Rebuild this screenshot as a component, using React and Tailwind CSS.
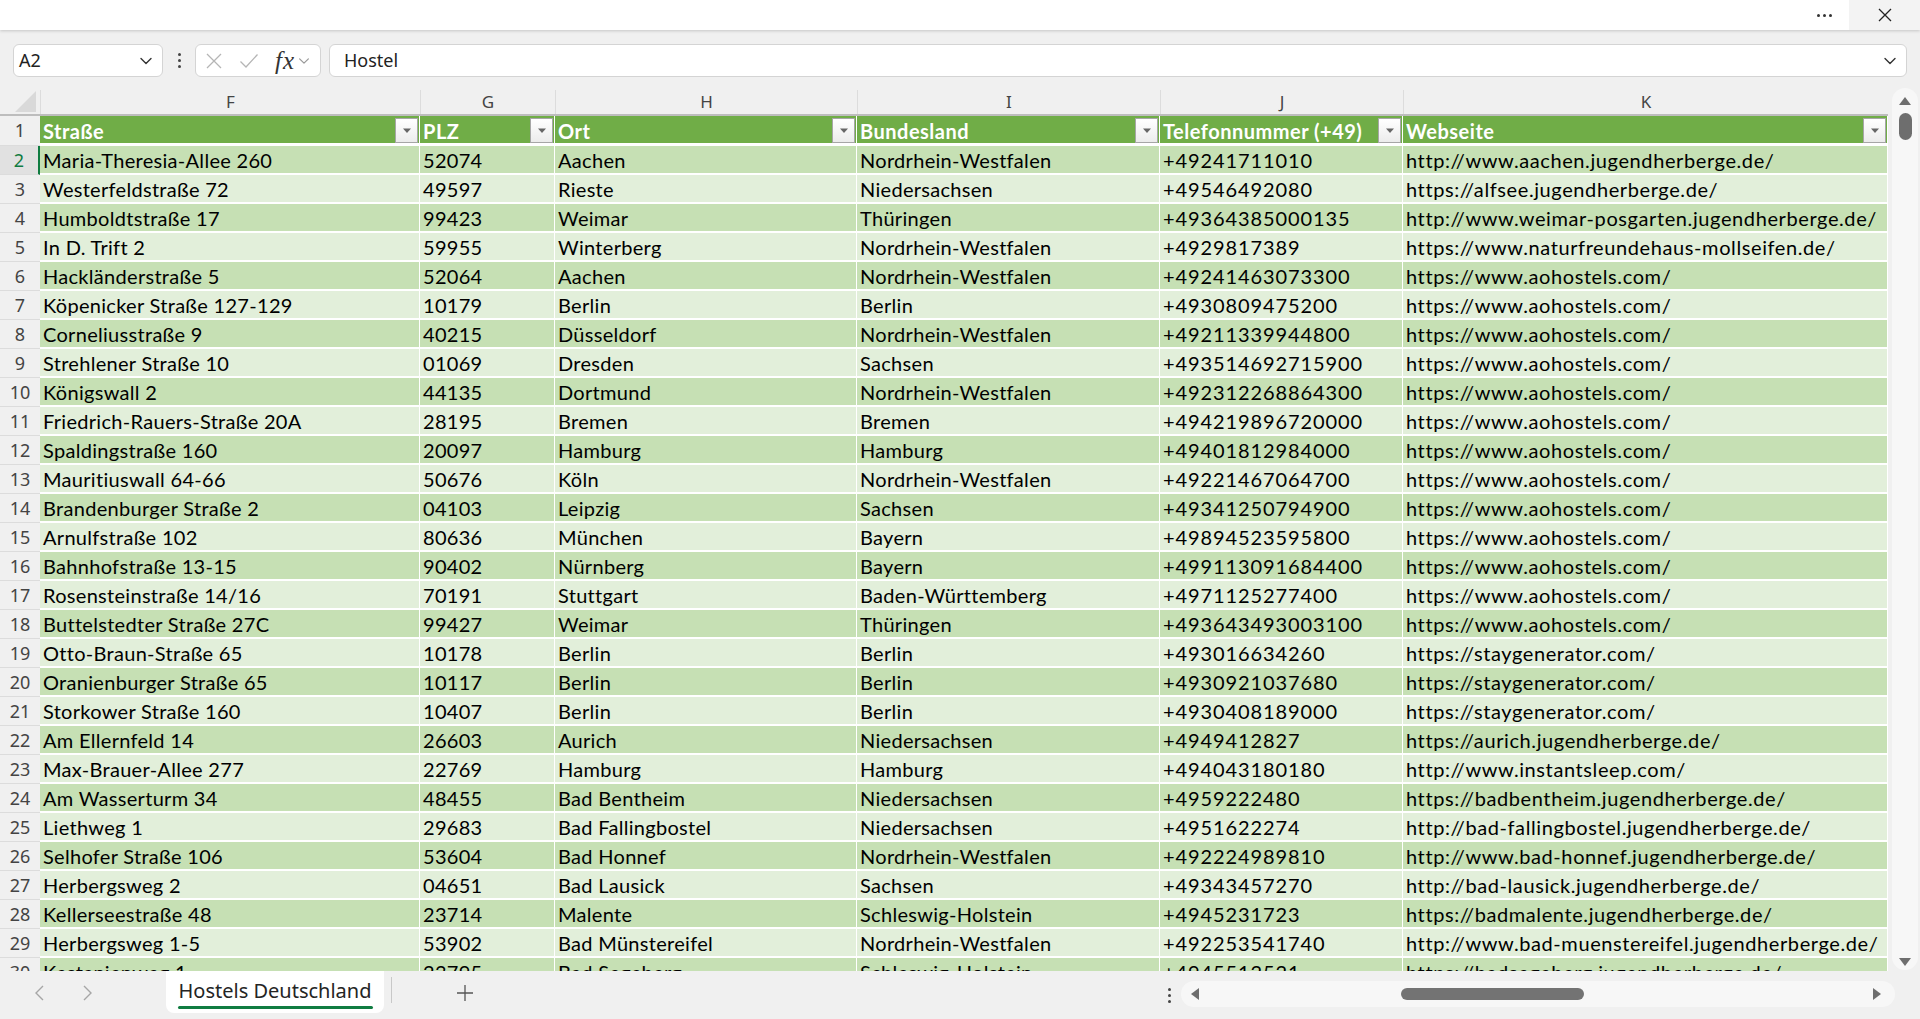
import React from "react";

const rows = [
  ["Maria-Theresia-Allee 260", "52074", "Aachen", "Nordrhein-Westfalen", "+49241711010", "http://www.aachen.jugendherberge.de/"],
  ["Westerfeldstraße 72", "49597", "Rieste", "Niedersachsen", "+49546492080", "https://alfsee.jugendherberge.de/"],
  ["Humboldtstraße 17", "99423", "Weimar", "Thüringen", "+49364385000135", "http://www.weimar-posgarten.jugendherberge.de/"],
  ["In D. Trift 2", "59955", "Winterberg", "Nordrhein-Westfalen", "+4929817389", "https://www.naturfreundehaus-mollseifen.de/"],
  ["Hackländerstraße 5", "52064", "Aachen", "Nordrhein-Westfalen", "+49241463073300", "https://www.aohostels.com/"],
  ["Köpenicker Straße 127-129", "10179", "Berlin", "Berlin", "+4930809475200", "https://www.aohostels.com/"],
  ["Corneliusstraße 9", "40215", "Düsseldorf", "Nordrhein-Westfalen", "+49211339944800", "https://www.aohostels.com/"],
  ["Strehlener Straße 10", "01069", "Dresden", "Sachsen", "+493514692715900", "https://www.aohostels.com/"],
  ["Königswall 2", "44135", "Dortmund", "Nordrhein-Westfalen", "+492312268864300", "https://www.aohostels.com/"],
  ["Friedrich-Rauers-Straße 20A", "28195", "Bremen", "Bremen", "+494219896720000", "https://www.aohostels.com/"],
  ["Spaldingstraße 160", "20097", "Hamburg", "Hamburg", "+49401812984000", "https://www.aohostels.com/"],
  ["Mauritiuswall 64-66", "50676", "Köln", "Nordrhein-Westfalen", "+49221467064700", "https://www.aohostels.com/"],
  ["Brandenburger Straße 2", "04103", "Leipzig", "Sachsen", "+49341250794900", "https://www.aohostels.com/"],
  ["Arnulfstraße 102", "80636", "München", "Bayern", "+49894523595800", "https://www.aohostels.com/"],
  ["Bahnhofstraße 13-15", "90402", "Nürnberg", "Bayern", "+499113091684400", "https://www.aohostels.com/"],
  ["Rosensteinstraße 14/16", "70191", "Stuttgart", "Baden-Württemberg", "+4971125277400", "https://www.aohostels.com/"],
  ["Buttelstedter Straße 27C", "99427", "Weimar", "Thüringen", "+493643493003100", "https://www.aohostels.com/"],
  ["Otto-Braun-Straße 65", "10178", "Berlin", "Berlin", "+493016634260", "https://staygenerator.com/"],
  ["Oranienburger Straße 65", "10117", "Berlin", "Berlin", "+4930921037680", "https://staygenerator.com/"],
  ["Storkower Straße 160", "10407", "Berlin", "Berlin", "+4930408189000", "https://staygenerator.com/"],
  ["Am Ellernfeld 14", "26603", "Aurich", "Niedersachsen", "+4949412827", "https://aurich.jugendherberge.de/"],
  ["Max-Brauer-Allee 277", "22769", "Hamburg", "Hamburg", "+494043180180", "http://www.instantsleep.com/"],
  ["Am Wasserturm 34", "48455", "Bad Bentheim", "Niedersachsen", "+4959222480", "https://badbentheim.jugendherberge.de/"],
  ["Liethweg 1", "29683", "Bad Fallingbostel", "Niedersachsen", "+4951622274", "http://bad-fallingbostel.jugendherberge.de/"],
  ["Selhofer Straße 106", "53604", "Bad Honnef", "Nordrhein-Westfalen", "+492224989810", "http://www.bad-honnef.jugendherberge.de/"],
  ["Herbergsweg 2", "04651", "Bad Lausick", "Sachsen", "+49343457270", "http://bad-lausick.jugendherberge.de/"],
  ["Kellerseestraße 48", "23714", "Malente", "Schleswig-Holstein", "+4945231723", "https://badmalente.jugendherberge.de/"],
  ["Herbergsweg 1-5", "53902", "Bad Münstereifel", "Nordrhein-Westfalen", "+492253541740", "http://www.bad-muenstereifel.jugendherberge.de/"],
  ["Kastanienweg 1", "23795", "Bad Segeberg", "Schleswig-Holstein", "+4945512521", "https://badsegeberg.jugendherberge.de/"],
];

const cols = [
  { letter: "F", title: "Straße", w: "w-[380px]" },
  { letter: "G", title: "PLZ", w: "w-[135px]" },
  { letter: "H", title: "Ort", w: "w-[302px]" },
  { letter: "I", title: "Bundesland", w: "w-[303px]" },
  { letter: "J", title: "Telefonnummer (+49)", w: "w-[243px]" },
  { letter: "K", title: "Webseite", w: "w-[485px]" },
];

const cellFont = { fontFamily: "Lato, 'Liberation Sans', sans-serif" };
const uiFont = { fontFamily: "'Noto Sans', 'Open Sans', sans-serif" };

function FilterBtn() {
  return (
    <div className="absolute right-[1px] top-[2px] w-[23px] h-[25px] bg-gradient-to-b from-white to-[#ececec] border border-[#a6a6a6] flex items-center justify-center">
      <svg width="10" height="6" viewBox="0 0 10 6">
        <path d="M1 0.5 L9 0.5 L5 5 Z" fill="#666" />
      </svg>
    </div>
  );
}

function Chevron({ size = 14, color = "#333" }) {
  return (
    <svg width={size} height={size} viewBox="0 0 16 16" fill="none">
      <path d="M3 5.5 L8 10.5 L13 5.5" stroke={color} strokeWidth="1.4" strokeLinecap="round" strokeLinejoin="round" />
    </svg>
  );
}

function VDots({ color = "#333" }) {
  return (
    <div className="flex flex-col gap-[3px] items-center">
      <div className="w-[3px] h-[3px] rounded-full" style={{ background: color }} />
      <div className="w-[3px] h-[3px] rounded-full" style={{ background: color }} />
      <div className="w-[3px] h-[3px] rounded-full" style={{ background: color }} />
    </div>
  );
}

const spanCls = ["leading-none pt-[1px]", "leading-none pt-[1px]", "leading-none pt-[1px]", "leading-none pt-[1px]", "leading-none pt-[1px] tracking-[0.9px]", "leading-none pt-[1px] tracking-[0.6px]"];

export default function App() {
  return (
    <div className="w-[1920px] h-[1019px] bg-[#f0f0f0] flex flex-col overflow-hidden" style={uiFont}>
      {/* Top bar */}
      <div className="h-[30px] bg-white flex items-center justify-end shadow-[0_1px_3px_rgba(0,0,0,0.18)] relative z-10 shrink-0">
        <div className="w-[50px] h-[30px] flex items-center justify-center gap-[3px]">
          <div className="w-[3px] h-[3px] rounded-full bg-[#333]" />
          <div className="w-[3px] h-[3px] rounded-full bg-[#333]" />
          <div className="w-[3px] h-[3px] rounded-full bg-[#333]" />
        </div>
        <div className="w-[71px] h-[30px] bg-[#f3f3f3] flex items-center justify-center">
          <svg width="16" height="16" viewBox="0 0 16 16">
            <path d="M2 2 L14 14 M14 2 L2 14" stroke="#222" strokeWidth="1.3" />
          </svg>
        </div>
      </div>

      {/* Formula bar */}
      <div className="h-[58px] shrink-0 flex items-start pt-[14px] pl-[13px] pr-[13px]">
        <div className="w-[150px] h-[33px] bg-white border border-[#d4d4d4] rounded-[6px] flex items-center justify-between pl-[5px] pr-[8px]">
          <span className="text-[18px] text-[#222]">A2</span>
          <Chevron size={16} color="#333" />
        </div>
        <div className="w-[32px] h-[33px] flex items-center justify-center">
          <VDots color="#444" />
        </div>
        <div className="w-[126px] h-[33px] bg-white border border-[#d4d4d4] rounded-[6px] flex items-center pl-[9px]">
          <svg width="18" height="18" viewBox="0 0 18 18" className="mr-[16px]">
            <path d="M2 2 L16 16 M16 2 L2 16" stroke="#b5b5b5" strokeWidth="1.3" />
          </svg>
          <svg width="20" height="18" viewBox="0 0 20 18" className="mr-[16px]">
            <path d="M1.5 9.5 L7 15 L18.5 2.5" stroke="#b5b5b5" strokeWidth="1.3" fill="none" />
          </svg>
          <span className="text-[25px] italic text-[#333] leading-none mr-[2px] tracking-[1px]" style={{ fontFamily: "'Liberation Serif', serif" }}>fx</span>
          <Chevron size={14} color="#999" />
        </div>
        <div className="ml-[8px] flex-1 h-[33px] bg-white border border-[#d4d4d4] rounded-[6px] flex items-center justify-between pl-[14px] pr-[8px]">
          <span className="text-[18px] text-[#222]">Hostel</span>
          <Chevron size={16} color="#333" />
        </div>
      </div>

      {/* Grid area */}
      <div className="flex h-[883px] shrink-0">
        <div className="w-[1888px] pt-[2px] flex flex-col">
          {/* Column headers */}
          <div className="flex h-[26px] border-b-2 border-[#bdbdbd] shrink-0">
            <div className="w-[40px] relative">
              <svg width="22" height="22" viewBox="0 0 22 22" className="absolute left-[15px] top-[1px]">
                <path d="M21 0 L21 21 L0 21 Z" fill="#d9d9d9" />
              </svg>
            </div>
            {cols.map((c) => (
              <div key={c.letter} className={`${c.w} border-l border-[#dcdcdc] flex items-center justify-center text-[17px] text-[#444]`}>
                {c.letter}
              </div>
            ))}
          </div>
          {/* Rows */}
          <div className="flex-1 overflow-hidden tracking-[0.3px]" style={cellFont}>
            {/* Header row 1 */}
            <div className="flex h-[30px]">
              <div className="w-[40px] flex items-center justify-center text-[18px] text-[#444] border-b border-[#dcdcdc] tracking-normal" style={uiFont}>1</div>
              {cols.map((c) => (
                <div key={c.letter} className={`${c.w} relative bg-[#70ad47] border-b-[3px] border-r border-white flex items-center pl-[3px] text-[20px] font-bold text-white tracking-[0.5px]`}>
                  <span className="leading-none pt-[2px]">{c.title}</span>
                  <FilterBtn />
                </div>
              ))}
            </div>
            {rows.map((r, i) => {
              const n = i + 2;
              const bg = n % 2 === 0 ? "bg-[#c6e0b4]" : "bg-[#e2efda]";
              const active = n === 2;
              return (
                <div key={n} className="flex h-[29px]">
                  <div
                    className={
                      active
                        ? "w-[40px] flex items-center justify-center text-[18px] tracking-normal text-[#107c41] bg-[#e1e1e1] border-r-2 border-[#107c41] border-b border-b-[#dcdcdc]"
                        : "w-[40px] flex items-center justify-center text-[18px] tracking-normal text-[#444] border-b border-[#dcdcdc]"
                    }
                    style={uiFont}
                  >
                    {n}
                  </div>
                  {r.map((v, j) => (
                    <div
                      key={j}
                      className={`${cols[j].w} ${bg} border-b-2 border-r border-white flex items-center pl-[3px] text-[20px] text-black whitespace-nowrap overflow-hidden`}
                    >
                      <span className={spanCls[j]}>{v}</span>
                    </div>
                  ))}
                </div>
              );
            })}
          </div>
        </div>
        {/* Vertical scrollbar */}
        <div className="ml-[4px] w-[26px] h-[882px] bg-[#f7f7f7] rounded-full flex flex-col items-center pt-[8px] pb-[3px]">
          <svg width="14" height="10" viewBox="0 0 14 10">
            <path d="M7 1 L13 9 L1 9 Z" fill="#6e6e6e" />
          </svg>
          <div className="mt-[7px] w-[13px] h-[27px] rounded-full bg-[#6e6e6e]" />
          <div className="flex-1" />
          <svg width="14" height="10" viewBox="0 0 14 10">
            <path d="M1 1 L13 1 L7 9 Z" fill="#6e6e6e" />
          </svg>
        </div>
      </div>

      {/* Bottom bar */}
      <div className="flex-1 flex items-start relative">
        <div className="w-[166px] h-[44px] flex items-center">
          <span className="ml-[33px]">
            <svg width="14" height="18" viewBox="0 0 14 18"><path d="M10 2 L3 9 L10 16" stroke="#a6a6a6" strokeWidth="1.4" fill="none" /></svg>
          </span>
          <span className="ml-[33px]">
            <svg width="14" height="18" viewBox="0 0 14 18"><path d="M4 2 L11 9 L4 16" stroke="#a6a6a6" strokeWidth="1.4" fill="none" /></svg>
          </span>
        </div>
        <div className="w-[218px] h-[42px] bg-white rounded-b-[8px] flex flex-col items-center justify-center relative">
          <span className="text-[20px] text-[#242424] leading-none mb-[2px]">Hostels Deutschland</span>
          <div className="absolute bottom-[4px] left-[12px] right-[11px] h-[3px] rounded-full bg-[#107c41]" />
        </div>
        <div className="ml-[7px] mt-[6px] w-[1px] h-[26px] bg-[#c8c8c8]" />
        <div className="ml-[64px] h-[44px] flex items-center">
          <svg width="18" height="18" viewBox="0 0 18 18"><path d="M9 1 L9 17 M1 9 L17 9" stroke="#555" strokeWidth="1.3" /></svg>
        </div>
        <div className="flex-1" />
        <div className="h-[44px] w-[24px] flex items-center justify-center mt-[2px]">
          <VDots color="#444" />
        </div>
        <div className="mt-[10px] w-[714px] h-[26px] rounded-full bg-[#f7f7f7] flex items-center mr-[25px] relative">
          <svg width="10" height="14" viewBox="0 0 10 14" className="absolute left-[9px] top-[6px]"><path d="M9 1 L9 13 L1 7 Z" fill="#6e6e6e" /></svg>
          <div className="absolute left-[220px] top-[7px] w-[183px] h-[12px] rounded-full bg-[#737373]" />
          <svg width="10" height="14" viewBox="0 0 10 14" className="absolute right-[13px] top-[6px]"><path d="M1 1 L1 13 L9 7 Z" fill="#6e6e6e" /></svg>
        </div>
      </div>
    </div>
  );
}
